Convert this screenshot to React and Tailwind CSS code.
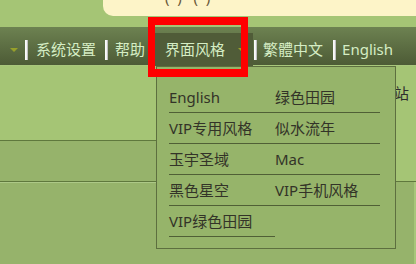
import React from 'react';

const font = { fontFamily: '"Noto Sans", "Noto Sans CJK SC", sans-serif' };

const styles = [
  ['English', '绿色田园'],
  ['VIP专用风格', '似水流年'],
  ['玉宇圣域', 'Mac'],
  ['黑色星空', 'VIP手机风格'],
  ['VIP绿色田园'],
];

function Arrow() {
  return <div className="w-0 h-0 border-l-[4px] border-r-[4px] border-t-[4px] border-l-transparent border-r-transparent border-t-[#97a02a]" />;
}

function Sep() {
  return <div className="w-[3px] h-[20px] bg-gradient-to-r from-white via-[#f2f2f2] to-[#a8a8a8]" />;
}

export default function App() {
  return (
    <div className="relative w-[416px] h-[264px] overflow-hidden bg-[#a5c575] text-[15px]" style={font}>
      {/* top notice strip */}
      <div className="h-[27px]">
        <div className="ml-[103px] h-[16px] bg-[#fdf4c8] rounded-bl-[10px] overflow-hidden">
          <div className="-mt-[13px] ml-[62px] text-[#6b5a3a] whitespace-pre leading-[20px]">{'(  )   (  )'}</div>
        </div>
      </div>

      {/* nav bar */}
      <div className="h-[39px] bg-gradient-to-b from-[#6d8251] to-[#4d5b36] border-b border-[#a9c77c]">
        <div className="flex items-center h-[39px] pt-[6px] text-[#d5edc4] leading-none">
          <div className="ml-[10px]"><Arrow /></div>
          <div className="ml-[7px]"><Sep /></div>
          <span className="ml-[8px]">系统设置</span>
          <div className="ml-[9px]"><Sep /></div>
          <span className="ml-[7px]">帮助</span>
          <div className="ml-[10px] w-[98px] h-[33px] bg-[#505c38] flex items-center pl-[10px]">
            <span>界面风格</span>
            <div className="ml-[13px]"><Arrow /></div>
          </div>
          <div className="ml-[1px]"><Sep /></div>
          <span className="ml-[6px]">繁體中文</span>
          <div className="ml-[10px]"><Sep /></div>
          <span className="ml-[6px]">English</span>
        </div>
      </div>

      {/* content under nav */}
      <div className="flex">
        <div className="w-[157px]">
          <div className="h-[75px] border-b border-[#5f783d]" />
          <div className="h-[41px] bg-[#96b36b] border-b border-[#5f783d]" />
          <div className="h-[90px] bg-[#96b36b] border-t border-[#adc887]" />
        </div>
        <div className="flex-1">
          <div className="h-[116px] border-b border-[#5f783d] flex justify-end pr-[7px] pt-[16px] text-[#2d2d2d]">网站</div>
          <div className="h-[90px] bg-[#96b36b] border-r-2 border-[#a8c67a]" />
        </div>
      </div>

      {/* style dropdown */}
      <div className="absolute left-[156px] top-[66px] w-[240px] h-[183px] bg-[#96b46a] border border-[#5d6f3f] pt-[15px] pl-[12px]">
        <div className="grid grid-cols-[106px_105px] w-[211px]">
          {styles.flatMap((row) => row).map((s) => (
            <div key={s} className="h-[31px] border-b border-[#505f36] flex items-center text-[#333328]">
              {s}
            </div>
          ))}
        </div>
      </div>

      {/* highlight box */}
      <div className="absolute left-[148px] top-[17px] w-[100px] h-[60px] border-x-[7px] border-y-[8px] border-[#ff0000]" />
    </div>
  );
}
